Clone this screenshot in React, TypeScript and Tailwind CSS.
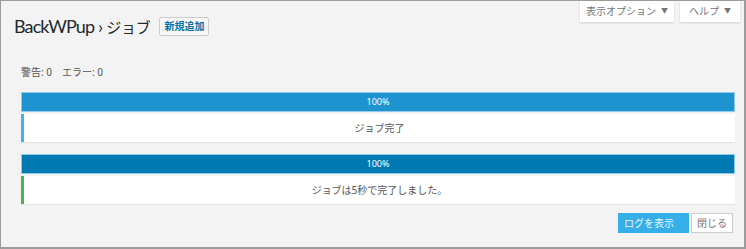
import React from "react";

const font = { fontFamily: '"Noto Sans", "Noto Sans CJK JP", sans-serif' };

export default function App() {
  return (
    <div
      className="w-[746px] h-[249px] bg-[#f3f3f3] border-t border-l border-r-2 border-b-2 border-[#9c9c9c] text-[#555]"
      style={font}
    >
      <div className="flex justify-end gap-[6px] pr-[4px]">
        <div className="w-[94px] h-[21px] bg-white shadow-[0_1px_2px_rgba(0,0,0,0.15)] flex items-center justify-center text-[10px] text-[#72777c] gap-[5px]">
          <span>表示オプション</span>
          <span className="text-[7px]">▼</span>
        </div>
        <div className="w-[60px] h-[21px] bg-white shadow-[0_1px_2px_rgba(0,0,0,0.15)] flex items-center justify-center text-[10px] text-[#72777c] gap-[5px]">
          <span>ヘルプ</span>
          <span className="text-[7px]">▼</span>
        </div>
      </div>
      <div className="flex items-center pl-[13px] -mt-[10px] h-[28px]">
        <span
          className="text-[18px] text-[#23282d] leading-none tracking-[-0.9px]"
          style={{ fontFamily: '"Lato", "Noto Sans CJK JP", sans-serif' }}
        >
          BackWPup<span className="mx-[4px]">›</span><span className="text-[15px] tracking-[-0.3px]">ジョブ</span>
        </span>
        <span className="ml-[9px] h-[19px] px-[4px] border border-[#ccc] bg-[#f7f7f7] text-[#0073aa] text-[10px] font-semibold flex items-center rounded-[2px]">
          新規追加
        </span>
      </div>
      <div className="pl-[20px] mt-[27px] text-[10px] leading-none flex gap-[10px]">
        <span>警告: 0</span>
        <span>エラー: 0</span>
      </div>
      <div className="pl-[20px] pr-[9px] mt-[15px] flex flex-col">
        <div className="h-[20px] bg-[#1f93d0] border border-[#8fcbea] flex items-center justify-center text-white text-[9px]">
          100%
        </div>
        <div className="mt-[2px] h-[28px] bg-white border-l-[3px] border-[#41b1ea] shadow-[0_1px_1px_rgba(0,0,0,0.06)] flex items-center justify-center text-[10px] text-[#555]">
          ジョブ完了
        </div>
        <div className="mt-[12px] h-[20px] bg-[#0079b3] border border-[#8fcbea] flex items-center justify-center text-white text-[9px]">
          100%
        </div>
        <div className="mt-[2px] h-[28px] bg-white border-l-[3px] border-[#46b450] shadow-[0_1px_1px_rgba(0,0,0,0.06)] flex items-center justify-center text-[10px] text-[#555]">
          ジョブは5秒で完了しました。
        </div>
      </div>
      <div className="flex justify-end pr-[11px] mt-[9px] gap-[2px]">
        <div className="w-[71px] h-[20px] bg-[#36aee8] text-[#e8f5fc] text-[10px] flex items-center pl-[6px]">
          ログを表示
        </div>
        <div className="w-[42px] h-[20px] bg-white border border-[#ccc] text-[#777] text-[10px] flex items-center justify-center">
          閉じる
        </div>
      </div>
    </div>
  );
}
